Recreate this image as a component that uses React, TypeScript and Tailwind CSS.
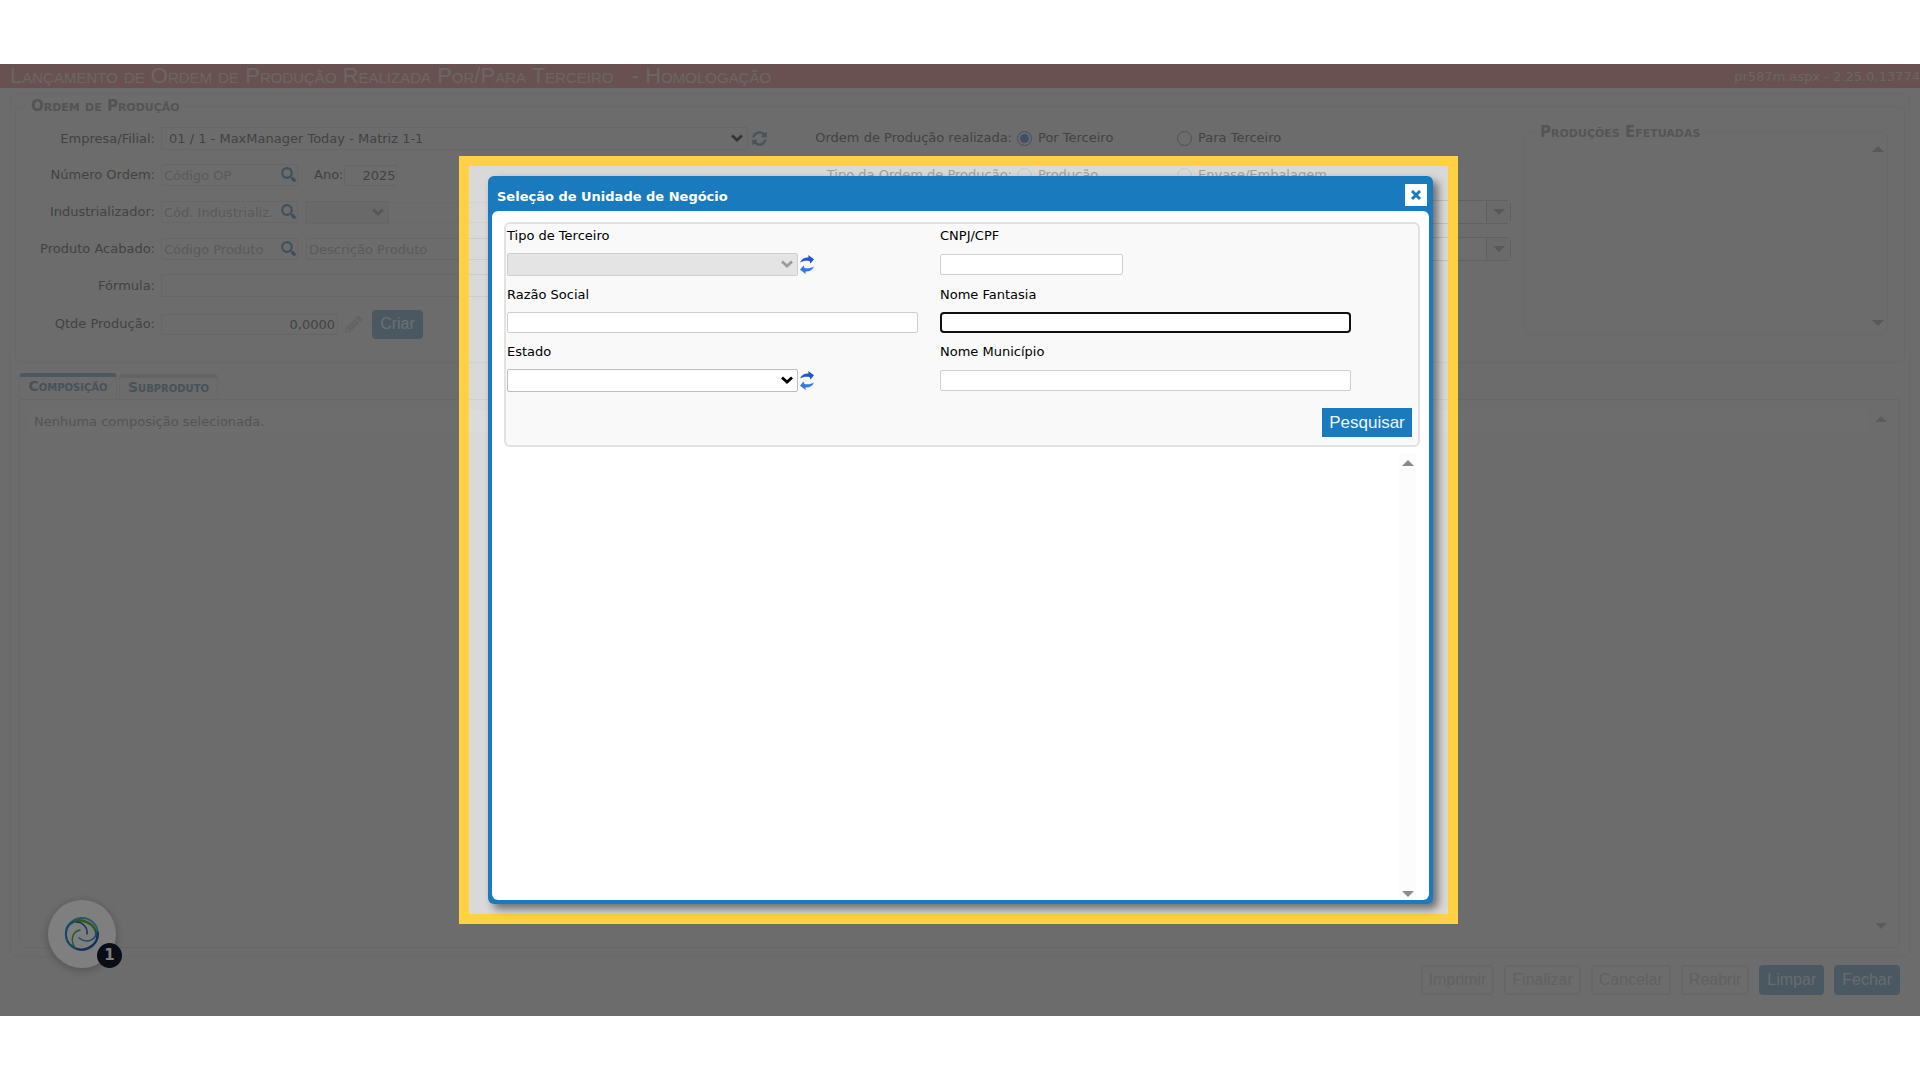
import { useState } from "react";
import type { ReactNode } from "react";
import { FaSyncAlt, FaPencilAlt } from "react-icons/fa";

const INPUT = "border border-[#cccccc] rounded-xs bg-transparent outline-none placeholder:text-[#b4b4b4]";
const MODAL_INPUT = "block h-[21px] border border-[#cfcfcf] rounded-xs bg-white outline-none px-1";
const MODAL_LABEL = "block h-5 leading-5";

function Caret({ up = false, className = "" }: { up?: boolean; className?: string }) {
  return (
    <svg viewBox="0 0 12 6" className={`w-3 h-1.5 fill-current ${className}`}>
      <path d={up ? "M0 6 6 0l6 6z" : "M0 0h12L6 6z"} />
    </svg>
  );
}

function Chevron({ className = "" }: { className?: string }) {
  return (
    <svg viewBox="0 0 12 8" className={`absolute right-[5px] top-[7px] w-3 h-2 pointer-events-none ${className}`}>
      <path d="M1 1.500 6 6l5-4.500" fill="none" stroke="currentColor" strokeWidth="2.800" />
    </svg>
  );
}

function SwapIcon() {
  return (
    <svg viewBox="0 0 14 19" className="w-3.5 h-[19px]">
      <path d="M0 7.500C1.500 4 4.500 2.300 8.500 2.500L8.300 0 14 4.200 10.500 8.500 9.500 6C6 5.300 3 5.800 0 7.500z" fill="#1d56cf" />
      <path d="M14 11.500c-1.500 3.500-4.500 5.200-8.500 5l.2 2.500L0 14.800l3.500-4.300 1 2.500c3.500.7 6.500.200 9.500-1.500z" fill="#3478e5" />
    </svg>
  );
}

function Row({ label, id, className, children }: { label: string; id: string; className: string; children: ReactNode }) {
  return (
    <div className={`flex items-center ${className}`}>
      <label htmlFor={id} className="w-[139px] shrink-0 text-right mr-1.5">{label}</label>
      {children}
    </div>
  );
}

function SearchInput({ id, placeholder }: { id: string; placeholder: string }) {
  return (
    <div className="relative shrink-0">
      <input id={id} placeholder={placeholder} className={`block w-[137px] h-[22px] pl-0.5 pr-6 ${INPUT}`} />
      <button aria-label="Buscar" className="absolute right-0.5 top-[3px] text-[#7ba0b9]">
        <svg viewBox="0 0 15 15" className="w-[15px] h-[15px]" fill="none" stroke="currentColor">
          <circle cx="6" cy="6" r="4.800" strokeWidth="2.200" />
          <path d="m11.500 11.500 1.800 1.800" strokeWidth="3.200" strokeLinecap="round" />
        </svg>
      </button>
    </div>
  );
}

function Combo({ label }: { label: string }) {
  return (
    <div className="flex h-6 w-[340px] border border-[#c2c2c2] rounded-sm">
      <input aria-label={label} className="flex-1 min-w-0 bg-[#dadada] rounded-l-sm outline-none" />
      <button aria-label={`Abrir ${label}`} className="w-6 flex items-center justify-center border-l border-[#c2c2c2] bg-[#d5d5d5] text-[#b0b0b0]">
        <Caret className="w-2.5" />
      </button>
    </div>
  );
}

function Radio({ name, label, on = false, faded = false }: { name: string; label: string; on?: boolean; faded?: boolean }) {
  return (
    <label className={`flex items-center gap-1.5 w-40 ${faded ? "text-[#a0a0a0]" : ""}`}>
      <input
        type="radio"
        name={name}
        defaultChecked={on}
        className={`appearance-none w-[15px] h-[15px] rounded-full border bg-clip-content p-0.5 checked:border-[#7f9fca] checked:bg-[#7f9fca] ${faded ? "border-[#c8c8c8]" : "border-[#a0a0a0]"}`}
      />
      {label}
    </label>
  );
}

function OrderForm() {
  return (
    <fieldset className="relative h-[267px] mx-1 mt-0.5 border border-[#d0d0d0] rounded-md min-w-0 flex">
      <legend className="ml-[11px] px-1 h-5 leading-5 text-[15px] font-bold [font-variant:small-caps] text-[#a8a8a8]">Ordem de Produção</legend>
      <div className="w-[771px] shrink-0 pt-[11px]">
        <Row label="Empresa/Filial:" id="empresa" className="h-[23px]">
          <div className="relative w-[587px]">
            <select id="empresa" className={`block w-full h-[23px] appearance-none px-[7px] ${INPUT}`}>
              <option>01 / 1 - MaxManager Today - Matriz 1-1</option>
            </select>
            <Chevron className="text-[#6b6b6b]" />
          </div>
          <button aria-label="Atualizar" className="ml-1 text-[#8fa6b6]"><FaSyncAlt size={15} /></button>
        </Row>
        <Row label="Número Ordem:" id="ordem" className="mt-3.5 h-[22px]">
          <SearchInput id="ordem" placeholder="Código OP" />
          <label htmlFor="ano" className="ml-4">Ano:</label>
          <input id="ano" defaultValue="2025" className={`ml-px w-[53px] h-[21px] text-right pr-px ${INPUT}`} />
        </Row>
        <Row label="Industrializador:" id="industrial" className="mt-[15px] h-[22px]">
          <SearchInput id="industrial" placeholder="Cód. Industrializ." />
          <div className="relative ml-[7px] shrink-0">
            <select aria-label="Tipo" className="block w-[84px] h-[23px] appearance-none border border-[#cacaca] rounded-xs bg-[#d3d3d3]" />
            <Chevron className="text-[#acacac]" />
          </div>
          <input aria-label="Nome do industrializador" className="flex-1 min-w-0 h-[21px] border border-l-0 border-[#d2d2d2] outline-none" />
        </Row>
        <Row label="Produto Acabado:" id="produto" className="mt-[15px] h-[22px]">
          <SearchInput id="produto" placeholder="Código Produto" />
          <input aria-label="Descrição" placeholder="Descrição Produto" className={`ml-2 flex-1 min-w-0 h-[22px] pl-0.5 ${INPUT}`} />
        </Row>
        <Row label="Fórmula:" id="formula" className="mt-3.5 h-[23px]">
          <input id="formula" className={`flex-1 min-w-0 h-[23px] ${INPUT}`} />
        </Row>
        <Row label="Qtde Produção:" id="qtde" className="mt-[13px] h-7">
          <input id="qtde" defaultValue="0,0000" className={`w-[177px] h-[21px] text-right pr-0.5 ${INPUT}`} />
          <button aria-label="Editar" className="ml-[7px] text-[#c6c6c6]"><FaPencilAlt size={17} /></button>
          <button className="ml-2.5 w-[51px] h-[29px] rounded-sm bg-[#94b0c4] text-[#d8dfe4] text-base font-['Liberation_Sans',sans-serif]">Criar</button>
        </Row>
      </div>
      <div className="w-[727px] shrink-0 pt-3">
        <div className="flex items-center h-5">
          <span className="w-[225px] text-right mr-[5px]">Ordem de Produção realizada:</span>
          <Radio name="realizada" label="Por Terceiro" on />
          <Radio name="realizada" label="Para Terceiro" />
        </div>
        <div className="flex items-center h-5 mt-[17px] text-[#a0a0a0]">
          <span className="w-[225px] text-right mr-[5px]">Tipo da Ordem de Produção:</span>
          <Radio name="tipo" label="Produção" faded />
          <Radio name="tipo" label="Envase/Embalagem" faded />
        </div>
        <div className="flex flex-col items-end gap-[13px] mt-[15px] pr-[3px]">
          <Combo label="Lote" />
          <Combo label="Depósito" />
        </div>
      </div>
      <fieldset className="relative flex-1 min-w-0 h-[213px] ml-2.5 mr-4 mt-1.5 border border-[#d0d0d0] rounded-md">
        <legend className="ml-[11px] px-1 h-5 leading-5 text-[15px] font-bold [font-variant:small-caps] text-[#ababab]">Produções Efetuadas</legend>
        <Caret up className="absolute right-[3px] top-1 text-[#b0b0b0]" />
        <Caret className="absolute right-[3px] bottom-2 text-[#b0b0b0]" />
      </fieldset>
    </fieldset>
  );
}

function Tabs() {
  return (
    <div className="flex-1 flex flex-col mt-2.5 ml-2 mr-[9px] mb-2 min-h-0">
      <div className="flex items-end gap-0.5 leading-4 text-[14px] font-bold [font-variant:small-caps] text-[#8fa4b3]">
        <button className="h-[26px] w-[98px] pb-1 border border-b-0 border-t-4 border-[#cfcfcf] border-t-[#94b0c4] rounded-t-sm [font-variant:small-caps]">Composição</button>
        <button className="h-[25px] w-[99px] pb-1 border border-b-0 border-t-4 border-[#cfcfcf] border-t-[#c6c6c6] rounded-t-sm [font-variant:small-caps]">Subproduto</button>
      </div>
      <div className="relative flex-1 border border-[#cfcfcf] rounded-b-md pt-2.5 pl-2.5 pr-[30px]">
        <p className="h-[23px] leading-[23px] pl-1 bg-[#dbdbdb] text-[#a8a8a8]">Nenhuma composição selecionada.</p>
        <Caret up className="absolute right-3 top-4 text-[#b9b9b9]" />
        <Caret className="absolute right-3 bottom-[18px] text-[#b9b9b9]" />
      </div>
    </div>
  );
}

function Footer() {
  const off = "h-[30px] px-1.5 border-2 border-[#cecece] rounded-sm text-[#c2c2c2]";
  const on = "h-[30px] px-2 rounded-sm bg-[#94b0c4] text-[#d0d6da]";
  return (
    <footer className="flex justify-end gap-2.5 pt-2 pr-5 pb-[21px] text-base font-['Liberation_Sans',sans-serif]">
      <button className={off}>Imprimir</button>
      <button className={off}>Finalizar</button>
      <button className={off}>Cancelar</button>
      <button className={off}>Reabrir</button>
      <button className={on}>Limpar</button>
      <button className={on}>Fechar</button>
    </footer>
  );
}

function HelpBubble() {
  return (
    <button aria-label="Ajuda" className="absolute left-12 bottom-12 w-[68px] h-[68px] rounded-full bg-white shadow-[0_2px_10px_rgba(0,0,0,0.25)] flex items-center justify-center">
      <svg viewBox="0 0 36 36" className="w-9 h-9" fill="none" strokeLinecap="round">
        <circle cx="18" cy="18" r="16" stroke="#5aa9d2" strokeWidth="1.800" />
        <path d="M7 7c9-6 25-1 26 14" stroke="#56b046" strokeWidth="2.600" />
        <path d="M34 17c0 14-16 21-26 13" stroke="#2b62b4" strokeWidth="2.200" />
        <path d="M9 31C-1 25 0 10 9 6" stroke="#2f8fcb" strokeWidth="2.200" />
        <path d="M12 6c7 0 12 6 11 12" stroke="#2b62b4" strokeWidth="1.500" />
        <path d="M32 15c1 9-9 13-17 7" stroke="#2f94cf" strokeWidth="1.500" />
        <path d="M11 32c-5-8-3-16 5-18" stroke="#56b046" strokeWidth="1.500" />
      </svg>
      <span className="absolute -right-1.5 bottom-0 w-[25px] h-[25px] rounded-full bg-[#141a2a] text-white text-[15px] font-bold leading-[25px] text-center">1</span>
    </button>
  );
}

function UnitDialog({ onClose }: { onClose: () => void }) {
  return (
    <div role="dialog" aria-label="Seleção de Unidade de Negócio" className="h-full flex flex-col bg-[#197bbd] rounded-md p-1 pt-0 shadow-[5px_5px_8px_rgba(0,0,0,0.5)] text-black">
      <header className="flex items-end justify-between h-[35px] shrink-0 pl-[5px] pr-0.5 pb-[5px]">
        <h2 className="text-white font-bold leading-[18px]">Seleção de Unidade de Negócio</h2>
        <button aria-label="Fechar janela" onClick={onClose} className="w-[22px] h-[22px] bg-white flex items-center justify-center">
          <svg viewBox="0 0 10 10" className="w-2.5 h-2.5"><path d="m1 1 8 8M9 1 1 9" stroke="#197bbd" strokeWidth="3" /></svg>
        </button>
      </header>
      <div className="flex-1 flex flex-col min-h-0 bg-white rounded-md pl-3 pr-[9px] pt-[11px]">
        <div className="flex flex-col justify-between border-2 border-[#e2e2e2] rounded-md bg-[#f9f9f9] h-[225px] pb-2">
          <div className="grid grid-cols-[433px_1fr] pl-px">
            <div className="h-[59px] pt-0.5">
              <label htmlFor="tipo" className={MODAL_LABEL}>Tipo de Terceiro</label>
              <div className="flex items-center gap-0.5 mt-[7px]">
                <div className="relative">
                  <select id="tipo" disabled className="block w-[291px] h-[23px] appearance-none border border-[#cfcfcf] rounded-xs bg-[#e4e4e4]" />
                  <Chevron className="text-[#9b9b9b]" />
                </div>
                <button aria-label="Atualizar tipos"><SwapIcon /></button>
              </div>
            </div>
            <div className="h-[59px] pt-0.5">
              <label htmlFor="cnpj" className={MODAL_LABEL}>CNPJ/CPF</label>
              <input id="cnpj" className={`mt-2 w-[183px] ${MODAL_INPUT}`} />
            </div>
            <div className="h-[57px] pt-0.5">
              <label htmlFor="razao" className={MODAL_LABEL}>Razão Social</label>
              <input id="razao" className={`mt-[7px] w-[411px] ${MODAL_INPUT}`} />
            </div>
            <div className="h-[57px] pt-0.5">
              <label htmlFor="fantasia" className={MODAL_LABEL}>Nome Fantasia</label>
              <input id="fantasia" className="mt-[7px] block w-[411px] h-[21px] border-2 border-[#101010] rounded-sm bg-white outline-none px-1" />
            </div>
            <div className="h-[57px] pt-0.5">
              <label htmlFor="estado" className={MODAL_LABEL}>Estado</label>
              <div className="flex items-center gap-0.5 mt-[7px]">
                <div className="relative">
                  <select id="estado" className="block w-[291px] h-[23px] appearance-none border border-[#bdbdbd] rounded-xs bg-white" />
                  <Chevron className="text-black" />
                </div>
                <button aria-label="Atualizar estados"><SwapIcon /></button>
              </div>
            </div>
            <div className="h-[57px] pt-0.5">
              <label htmlFor="municipio" className={MODAL_LABEL}>Nome Município</label>
              <input id="municipio" className={`mt-2 w-[411px] ${MODAL_INPUT}`} />
            </div>
          </div>
          <button className="self-end mr-1.5 h-[29px] w-[90px] bg-[#197bbd] text-[#eef5fa] text-[17px] leading-[29px] font-['Liberation_Sans',sans-serif]">Pesquisar</button>
        </div>
        <div className="flex-1 mt-1.5 flex flex-col items-center justify-between self-end w-[17px] mr-1 pt-[7px] pb-[3px] bg-[#fcfcfc] text-[#8b8b8b]">
          <Caret up />
          <Caret />
        </div>
      </div>
    </div>
  );
}

export default function App() {
  const [open, setOpen] = useState(true);

  return (
    <div className="min-h-screen flex flex-col bg-white py-16 text-[13px] font-['DejaVu_Sans',sans-serif]">
      <div className="relative flex-1 flex flex-col overflow-hidden bg-[#d9d9d9] text-[#858585]">
        <header className="flex items-center justify-between h-6 pl-2.5 bg-[#d4a2a2] text-[#d3cccc]">
          <h1 className="text-[22px] leading-6 [font-variant:small-caps] whitespace-pre font-['Liberation_Sans',sans-serif]">{"Lançamento de Ordem de Produção Realizada Por/Para Terceiro   - Homologação"}</h1>
          <span className="pt-0.5">pr587m.aspx - 2.25.0.13774</span>
        </header>
        <main className="flex-1 flex flex-col mt-[5px] mx-2.5 border border-[#d0d0d0] rounded-md">
          <OrderForm />
          <Tabs />
        </main>
        <Footer />
        <HelpBubble />

        {/* Highlight frame, its shadow dims the rest of the page */}
        {open && (
          <div className="absolute inset-y-[92px] left-[459px] right-[462px] border-10 border-[#ffd143] pl-[19px] pr-[15px] py-2.5 shadow-[0_0_0_2000px_rgba(0,0,0,0.5)]">
            <UnitDialog onClose={() => setOpen(false)} />
          </div>
        )}
      </div>
    </div>
  );
}
